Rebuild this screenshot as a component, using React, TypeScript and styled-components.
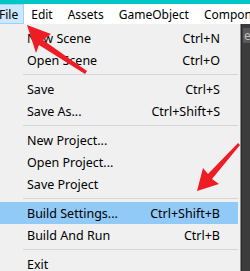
import styled, { createGlobalStyle } from "styled-components";

const GlobalStyle = createGlobalStyle`
  body {
    margin: 0;
    background: #f0f0f0;
    font-family: "Noto Sans", "Liberation Sans", sans-serif;
  }
`;

const Frame = styled.div`
  position: relative;
  width: 250px;
  height: 271px;
  overflow: hidden;
  display: flex;
  flex-direction: column;
  font-size: 12.5px;
  color: #000;
`;

const TitleStrip = styled.div`
  height: 4px;
  background: #00c6c6;
  flex-shrink: 0;
`;

const MenuBar = styled.div`
  height: 20px;
  display: flex;
  align-items: center;
  background: #ffffff;
  margin-left: -9px;
  flex-shrink: 0;
  white-space: nowrap;
  font-size: 12px;
`;

const BarItem = styled.div<{ $open?: boolean }>`
  height: 20px;
  box-sizing: border-box;
  display: flex;
  align-items: center;
  padding: 0 ${(p) => (p.$open ? "5px" : "7px")} 0 7px;
  background: ${(p) => (p.$open ? "#cce8ff" : "transparent")};
  border: 1px solid ${(p) => (p.$open ? "#99d1ff" : "transparent")};
  margin-right: -1px;
`;

const Body = styled.div`
  flex: 1;
  display: flex;
`;

const Dropdown = styled.div`
  width: 238px;
  padding: 3px 2px 0 0;
  background: #f0f0f0;
  border-right: 1px solid #8c8c8c;
  flex-shrink: 0;
`;

const Row = styled.div<{ $active?: boolean }>`
  height: 22px;
  display: flex;
  align-items: center;
  justify-content: space-between;
  padding: 0 18px 0 27px;
  background: ${(p) => (p.$active ? "#91c9f7" : "transparent")};
`;

const Separator = styled.div`
  height: 7px;
  display: flex;
  align-items: center;
  padding-left: 23px;

  &::after {
    content: "";
    flex: 1;
    height: 1px;
    background: #d5d5d5;
  }
`;

const DarkPanel = styled.div`
  flex: 1;
  background: #3c3c3c;
  border-left: 1px solid #2a2a2a;
  padding-top: 4px;
  display: flex;
  flex-direction: column;
  align-items: flex-end;
`;

const PanelTab = styled.div`
  width: 6px;
  height: 15px;
  background: #585858;
  color: #c0c0c0;
  font-size: 12px;
  line-height: 15px;
  overflow: hidden;
  padding-left: 1px;
`;

const ArrowLayer = styled.svg`
  position: absolute;
  left: 0;
  top: 0;
  pointer-events: none;
`;

type Entry = { label: string; key?: string; active?: boolean } | "sep";

const entries: Entry[] = [
  { label: "New Scene", key: "Ctrl+N" },
  { label: "Open Scene", key: "Ctrl+O" },
  "sep",
  { label: "Save", key: "Ctrl+S" },
  { label: "Save As...", key: "Ctrl+Shift+S" },
  "sep",
  { label: "New Project..." },
  { label: "Open Project..." },
  { label: "Save Project" },
  "sep",
  { label: "Build Settings...", key: "Ctrl+Shift+B", active: true },
  { label: "Build And Run", key: "Ctrl+B" },
  "sep",
  { label: "Exit" },
];

const menus = ["File", "Edit", "Assets", "GameObject", "Component"];

export default function App() {
  return (
    <Frame>
      <GlobalStyle />
      <TitleStrip />
      <MenuBar>
        {menus.map((m, i) => (
          <BarItem key={m} $open={i === 0}>
            {m}
          </BarItem>
        ))}
      </MenuBar>
      <Body>
        <Dropdown>
          {entries.map((e, i) =>
            e === "sep" ? (
              <Separator key={i} />
            ) : (
              <Row key={i} $active={e.active}>
                <span>{e.label}</span>
                {e.key && <span>{e.key}</span>}
              </Row>
            )
          )}
        </Dropdown>
        <DarkPanel>
          <PanelTab>e</PanelTab>
        </DarkPanel>
      </Body>
      <ArrowLayer width={250} height={271} viewBox="0 0 250 271">
        {/* arrow to the File menu */}
        <polygon points="27,25 51,34 43,40 87,71 85,74 39,45 36,53" fill="#ee1c25" />
        {/* arrow to Build Settings */}
        <polygon points="197,191 203,168 208,174 238,143 240,145 212,179 219,184" fill="#ee1c25" />
      </ArrowLayer>
    </Frame>
  );
}
